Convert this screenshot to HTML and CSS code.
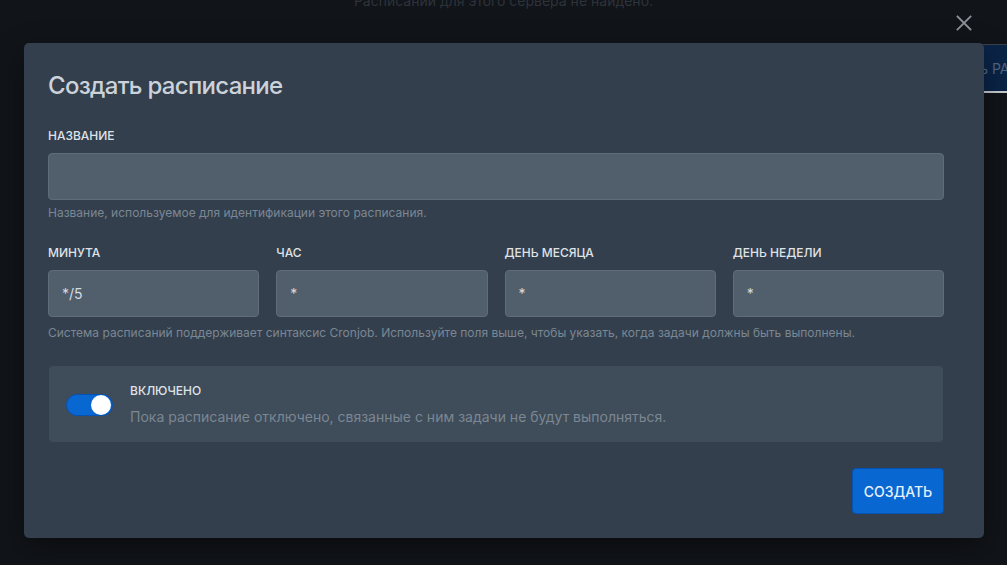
FILE: index.html
```html
<!DOCTYPE html>
<html lang="ru">
<head>
<meta charset="utf-8">
<title>Создать расписание</title>
<link rel="stylesheet" href="styles.css">
</head>
<body>
<div class="page">
  <p class="empty-note">Расписаний для этого сервера не найдено.</p>
  <button class="bg-button" type="button"><span class="bg-button-a">Создать</span> РАСПИСАНИЕ</button>

  <button class="close" type="button" aria-label="Закрыть">
    <svg width="16" height="16" viewBox="0 0 16 16" fill="none" stroke="currentColor" stroke-width="1.8" stroke-linecap="square"><path d="M1.5 1.5 L14.5 14.5 M14.5 1.5 L1.5 14.5"/></svg>
  </button>

  <div class="modal">
    <h2 class="modal-title">Создать расписание</h2>

    <div class="field">
      <label class="label">Название</label>
      <input class="input" type="text" value="">
      <p class="help">Название, используемое для идентификации этого расписания.</p>
    </div>

    <div class="cron">
      <div class="cron-grid">
        <div class="cron-col">
          <label class="label">Минута</label>
          <input class="input" type="text" value="*/5">
        </div>
        <div class="cron-col">
          <label class="label">Час</label>
          <input class="input" type="text" value="*">
        </div>
        <div class="cron-col">
          <label class="label">День месяца</label>
          <input class="input" type="text" value="*">
        </div>
        <div class="cron-col">
          <label class="label">День недели</label>
          <input class="input" type="text" value="*">
        </div>
      </div>
      <p class="help help-cron">Система расписаний поддерживает синтаксис Cronjob. Используйте поля выше, чтобы указать, когда задачи должны быть выполнены.</p>
    </div>

    <div class="toggle-box">
      <span class="switch"><span class="knob"></span></span>
      <div class="toggle-text">
        <div class="toggle-label">Включено</div>
        <div class="toggle-desc">Пока расписание отключено, связанные с ним задачи не будут выполняться.</div>
      </div>
    </div>

    <div class="actions">
      <button class="btn-primary" type="button">Создать</button>
    </div>
  </div>
</div>
</body>
</html>
```

FILE: styles.css
```css
* { box-sizing: border-box; }

html, body {
  margin: 0;
  padding: 0;
  width: 1007px;
  height: 565px;
  overflow: hidden;
  background: #111419;
  font-family: "Inter", "Noto Sans", sans-serif;
}

.page {
  position: relative;
  width: 1007px;
  height: 565px;
  overflow: hidden;
}

.empty-note {
  position: absolute;
  top: -9px;
  left: 0;
  right: 0;
  margin: 0;
  text-align: center;
  font-size: 14px;
  line-height: 20px;
  color: #2d333b;
}

.bg-button {
  position: absolute;
  left: 880px;
  top: 44px;
  width: 127px;
  height: 49px;
  background: #0a2447;
  border: 0;
  border-top: 1px solid #3b424b;
  border-bottom: 2px solid #c9ccd0;
  color: #55667e;
  font-family: inherit;
  font-size: 14px;
  text-align: left;
  padding: 0;
  white-space: nowrap;
  overflow: hidden;
}

.bg-button-a {
  display: inline-block;
  width: 108px;
  text-align: right;
}

.close {
  position: absolute;
  left: 956px;
  top: 15px;
  width: 16px;
  height: 16px;
  padding: 0;
  border: 0;
  background: none;
  color: #8c9199;
  display: flex;
}

.modal {
  position: absolute;
  left: 24px;
  top: 43px;
  width: 960px;
  height: 495px;
  padding: 24px 40px 24px 24px;
  background: #333f4d;
  border-radius: 5px;
  box-shadow: 0 10px 30px rgba(0, 0, 0, 0.4);
  display: flex;
  flex-direction: column;
}

.modal-title {
  margin: 3px 0 26px 0;
  font-size: 24px;
  line-height: 32px;
  font-weight: 500;
  letter-spacing: -0.7px;
  color: #cbd2d9;
}

.label {
  display: block;
  font-size: 12px;
  line-height: 16px;
  text-transform: uppercase;
  color: #dfe3e7;
  font-weight: 500;
  margin-bottom: 9px;
}

.input {
  display: block;
  width: 100%;
  height: 47px;
  padding: 0 13px;
  background: #515f6c;
  border: 1px solid #5f6c79;
  border-radius: 4px;
  color: #d6dbe0;
  font-family: inherit;
  font-size: 14px;
  outline: none;
}

.help {
  margin: 5px 0 0 0;
  font-size: 12px;
  line-height: 16px;
  color: #7b8793;
}

.help-cron {
  margin-top: 8px;
}

.cron {
  margin-top: 24px;
}

.cron-grid {
  display: grid;
  grid-template-columns: repeat(4, 1fr);
  column-gap: 17px;
}

.toggle-box {
  margin-top: 25px;
  margin-left: 1px;
  margin-right: 1px;
  height: 76px;
  background: #3f4c59;
  border-radius: 4px;
  display: flex;
  align-items: center;
  padding: 2px 17px 0 17px;
  gap: 17px;
}

.switch {
  width: 47px;
  height: 22px;
  border-radius: 11px;
  background: #0967d2;
  border: 1px solid #0552b5;
  display: flex;
  justify-content: flex-end;
  align-items: center;
  padding: 0 1px;
  flex-shrink: 0;
}

.knob {
  width: 20px;
  height: 20px;
  border-radius: 50%;
  background: #ffffff;
}

.toggle-label {
  font-size: 12px;
  line-height: 16px;
  text-transform: uppercase;
  color: #dfe3e7;
  font-weight: 500;
  margin-bottom: 8px;
}

.toggle-desc {
  font-size: 14px;
  line-height: 20px;
  color: #7b8793;
}

.actions {
  margin-top: auto;
  display: flex;
  justify-content: flex-end;
}

.btn-primary {
  height: 46px;
  width: 92px;
  background: #0967d2;
  border: 1px solid #0552b5;
  border-radius: 4px;
  color: #e6f0fb;
  font-family: inherit;
  font-size: 14px;
  font-weight: 500;
  text-transform: uppercase;
  padding: 0;
}
```
